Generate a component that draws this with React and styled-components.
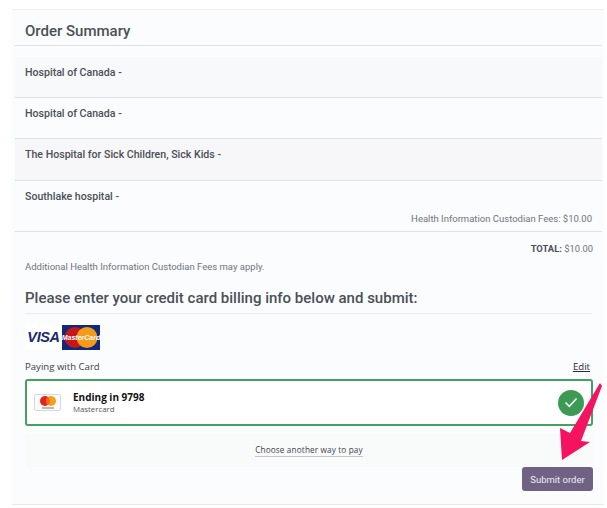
import React from 'react'
import styled, { createGlobalStyle } from 'styled-components'

const Global = createGlobalStyle`
    html, body {
        margin: 0;
        background: #fff;
    }
    * {
        box-sizing: border-box;
    }
`

const rows = [
    { name: 'Hospital of Canada -', shade: '#f8f9fa', height: 41 },
    { name: 'Hospital of Canada -', shade: 'transparent', height: 41 },
    { name: 'The Hospital for Sick Children, Sick Kids -', shade: '#f7f7f9', height: 42 },
    { name: 'Southlake hospital -', shade: 'transparent', height: 51, fee: 'Health Information Custodian Fees: $10.00' },
]

const App = () => {
    return (
        <Page>
            <Global />
            <Panel>
                <Title>Order Summary</Title>
                <RowList>
                    {rows.map((row, i) => (
                        <Row key={i} $shade={row.shade} $height={row.height}>
                            <RowName>{row.name}</RowName>
                            {row.fee && <Fee>{row.fee}</Fee>}
                        </Row>
                    ))}
                </RowList>
                <Total><b>TOTAL:</b> $10.00</Total>
                <Note>Additional Health Information Custodian Fees may apply.</Note>
                <Heading>Please enter your credit card billing info below and submit:</Heading>
                <Logos>
                    <VisaLogo><i>V</i>ISA</VisaLogo>
                    <MasterLogo>
                        <svg width="38" height="25" viewBox="0 0 38 25">
                            <rect width="38" height="25" fill="#0f2a78" />
                            <circle cx="13" cy="12.5" r="10.5" fill="#c4161c" />
                            <circle cx="25" cy="12.5" r="10.5" fill="#f49b1a" />
                            <text x="19" y="15" fontFamily="Liberation Sans" fontSize="7" fontWeight="700" fontStyle="italic" fill="#fff" textAnchor="middle">MasterCard</text>
                        </svg>
                    </MasterLogo>
                </Logos>
                <PayHeader>
                    <span>Paying with Card</span>
                    <EditLink>Edit</EditLink>
                </PayHeader>
                <CardBox>
                    <CardThumb>
                        <svg width="27" height="17" viewBox="0 0 27 17">
                            <circle cx="11" cy="7" r="5" fill="#e2231a" />
                            <circle cx="17" cy="7" r="5" fill="#f79e1b" />
                            <path d="M14 3.1a5 5 0 0 1 0 7.8a5 5 0 0 1 0-7.8z" fill="#f2641f" />
                            <rect x="8" y="13.5" width="12" height="1" fill="#777" />
                        </svg>
                    </CardThumb>
                    <CardText>
                        <CardTitle>Ending in 9798</CardTitle>
                        <CardSub>Mastercard</CardSub>
                    </CardText>
                    <Check>
                        <svg width="14" height="11" viewBox="0 0 14 11" fill="none">
                            <path d="M1.5 5.5l3.8 3.8L12.5 1.5" stroke="#fff" strokeWidth="1.5" />
                        </svg>
                    </Check>
                </CardBox>
                <Another>
                    <AnotherLink>Choose another way to pay</AnotherLink>
                </Another>
                <Actions>
                    <Submit>Submit order</Submit>
                </Actions>
            </Panel>
            <Arrow width="607" height="508" viewBox="0 0 607 508">
                <polygon points="600,383 602,386 581,441 590,442 562,460 560,428 570,433" fill="#f5135f" />
            </Arrow>
        </Page>
    )
}

const Page = styled.div`
    width: 607px;
    height: 508px;
    padding: 9px 3px 0 12px;
    position: relative;
    overflow: hidden;
    font-family: Roboto, "Liberation Sans", sans-serif;
    color: #495057;
`

const Panel = styled.div`
    width: 592px;
    height: 496px;
    background: #fbfcfe;
    border-top: 1px solid #eef0f2;
    border-bottom: 1px solid #e6e8ea;
`

const Title = styled.h2`
    margin: 0 2px 0 3px;
    padding: 11px 0 0 10px;
    height: 36px;
    font-size: 15px;
    line-height: 20px;
    font-weight: 500;
    color: #495057;
    border-bottom: 1px solid #dfe2e5;
`

const RowList = styled.div`
    margin: 11px 2px 0 3px;
`

const Row = styled.div`
    height: ${(p) => p.$height}px;
    padding: 9px 10px 0;
    background: ${(p) => p.$shade};
    border-bottom: 1px solid #dfe2e5;
    position: relative;
`

const RowName = styled.div`
    font-size: 10.6px;
    line-height: 13px;
    font-weight: 500;
    color: #495057;
`

const Fee = styled.div`
    margin-top: 10px;
    text-align: right;
    font-size: 9.5px;
    line-height: 12px;
    color: #6c757d;
`

const Total = styled.div`
    margin: 10px 11px 0 0;
    text-align: right;
    font-size: 9.4px;
    line-height: 13px;
    color: #6c757d;

    b {
        font-weight: 700;
        color: #495057;
    }
`

const Note = styled.div`
    margin: 6px 0 0 13px;
    font-size: 9.5px;
    line-height: 12px;
    color: #6c757d;
`

const Heading = styled.h3`
    margin: 15px 12px 0 13px;
    padding-bottom: 5px;
    font-size: 15px;
    line-height: 20px;
    font-weight: 500;
    color: #495057;
    border-bottom: 1px solid #e8eaec;
`

const Logos = styled.div`
    margin: 11px 0 0 13px;
    display: flex;
    align-items: center;
    gap: 0;
`

const VisaLogo = styled.div`
    width: 37px;
    height: 25px;
    background: #fff;
    font-family: "Liberation Sans", sans-serif;
    font-size: 14.5px;
    font-weight: 700;
    font-style: italic;
    line-height: 25px;
    text-align: center;
    letter-spacing: -0.4px;
    color: #1a2a6c;

    i {
        color: #1a2a6c;
        border-left: 0;
    }
`

const MasterLogo = styled.div`
    width: 38px;
    height: 25px;

    svg {
        display: block;
    }
`

const PayHeader = styled.div`
    margin: 10px 12px 0 13px;
    display: flex;
    justify-content: space-between;
    align-items: center;
    font-family: "Open Sans", sans-serif;
    font-size: 9.6px;
    line-height: 14px;
    color: #3c4043;
`

const EditLink = styled.a`
    margin-right: 2px;
    color: #2b2340;
    text-decoration: underline;
`

const CardBox = styled.div`
    margin: 5px 11px 0 13px;
    height: 47px;
    padding: 0 7px;
    background: #fff;
    border: 2px solid #46a05f;
    border-radius: 3px;
    display: flex;
    align-items: center;
    gap: 12px;
`

const CardThumb = styled.div`
    width: 27px;
    height: 17px;
    background: #fbfbfb;
    border: 1px solid #d8d8d8;
    border-radius: 2px;
    overflow: hidden;

    svg {
        display: block;
        margin: -1px;
    }
`

const CardText = styled.div`
    flex: 1;
`

const CardTitle = styled.div`
    font-family: "Open Sans", sans-serif;
    font-size: 10px;
    line-height: 13px;
    font-weight: 700;
    color: #111;
`

const CardSub = styled.div`
    font-family: "Open Sans", sans-serif;
    font-size: 7.8px;
    line-height: 10px;
    color: #555;
`

const Check = styled.div`
    width: 26px;
    height: 26px;
    border-radius: 50%;
    background: #3c9a55;
    display: flex;
    align-items: center;
    justify-content: center;
`

const Another = styled.div`
    margin: 8px 11px 0 13px;
    height: 33px;
    background: #f9fafa;
    display: flex;
    justify-content: center;
    padding-top: 10px;
`

const AnotherLink = styled.a`
    height: 13px;
    font-family: "Open Sans", sans-serif;
    font-size: 8.2px;
    line-height: 12px;
    letter-spacing: 0.15px;
    color: #40444a;
    border-bottom: 1px solid #c4c6c8;
`

const Actions = styled.div`
    margin: 0 11px 0 0;
    display: flex;
    justify-content: flex-end;
`

const Submit = styled.button`
    width: 71px;
    height: 24px;
    padding: 0;
    border: none;
    border-radius: 3px;
    background: #6f6285;
    color: #f2f0f5;
    font-family: Roboto, sans-serif;
    font-size: 9.5px;
`

const Arrow = styled.svg`
    position: absolute;
    left: 0;
    top: 0;
    pointer-events: none;
`

export default App
